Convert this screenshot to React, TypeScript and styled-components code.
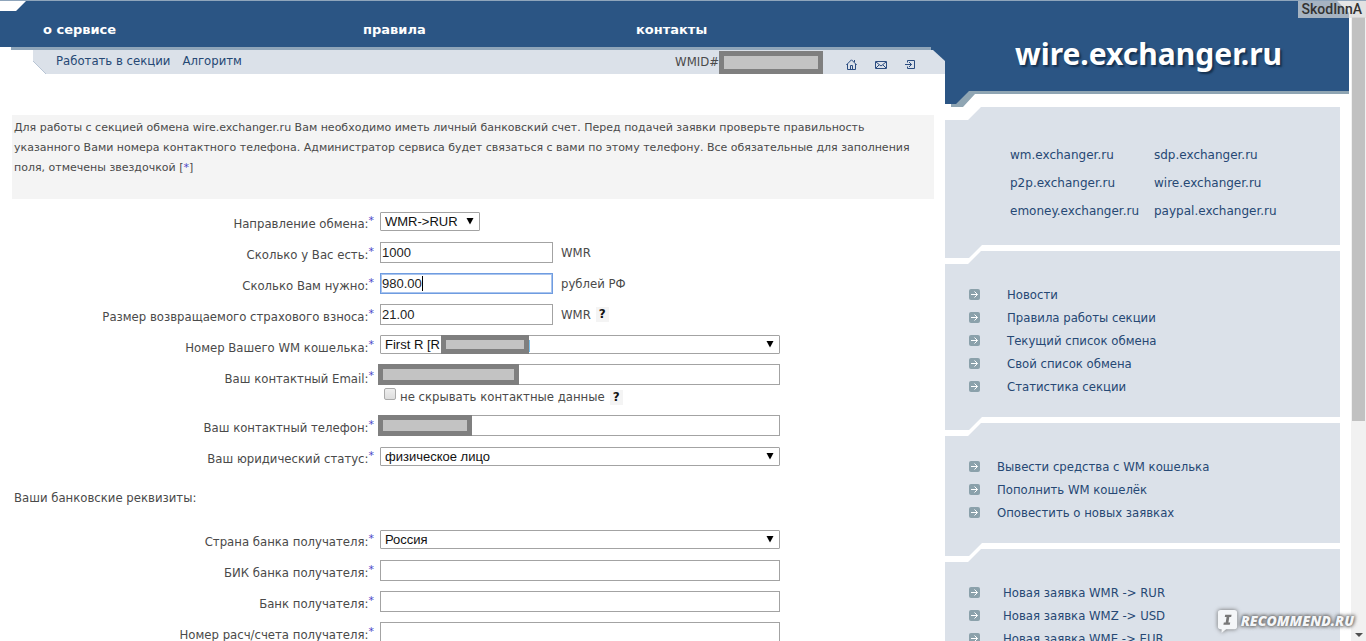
import React from 'react';
import styled, { createGlobalStyle } from 'styled-components';

const GlobalStyle = createGlobalStyle`
  *, *::before, *::after { box-sizing: border-box; }
  html, body, #root { height: 100%; }
  body { margin: 0; background: #fff; color: #4a4a4a; font: 13px/20px "DejaVu Sans Condensed", Tahoma, sans-serif; overflow: hidden; }
  a { color: #264874; text-decoration: none; }
  a:hover { text-decoration: underline; }
`;

const Window = styled.div`
  position: relative;
  display: flex;
  height: 100%;
  overflow: hidden;
  border-top: 1px solid #8fa5bb;
`;

const Main = styled.main`
  flex: 1;
  min-width: 0;
`;

const NavBar = styled.nav`
  display: flex;
  height: 46px;
  padding: 19px 0 0 43px;
  background: #2b5584;
  clip-path: polygon(26px 0, 100% 0, 100% 100%, 0 100%, 0 10px, 16px 10px);
`;

const NavLink = styled.a<{ $width: number }>`
  width: ${p => p.$width}px;
  color: #fff;
  font: bold 13px/20px "DejaVu Sans", Verdana, sans-serif;
`;

const NavShadow = styled.div`
  height: 3px;
  margin-left: 11px;
  background: linear-gradient(#8fa5b9, #8fa5b9) left / calc(100% - 14px) 100% no-repeat #2b5584;
`;

const SubBar = styled.div`
  height: 24px;
  margin-left: 33px;
  background: #2b5584;
  clip-path: polygon(0 0, 100% 0, 100% 100%, 13px 100%, 0 11px);
`;

const SubInner = styled.div`
  display: flex;
  align-items: center;
  height: 24px;
  padding: 0 30px 0 23px;
  background: #dbe1e9;
  clip-path: polygon(0 0, calc(100% - 12px) 0, 100% 11px, 100% 100%, 0 100%);
`;

const SubLinks = styled.div`
  display: flex;
  flex: 1;
  gap: 12px;
  padding-bottom: 2px;
`;

const Redacted = styled.span<{ $width: number }>`
  display: block;
  flex: none;
  width: ${p => p.$width}px;
  height: 23px;
  border: 5px solid #7f7f7f;
  background: #c3c3c3;
`;

const Tools = styled.div`
  display: flex;
  gap: 18px;
  margin-left: 23px;
  a { display: flex; padding-top: 4px; }
`;

const Intro = styled.p`
  margin: 41px 11px 9px 12px;
  padding: 3px 2px 21px;
  background: #f4f4f4;
  font: 11px/20px "DejaVu Sans", Verdana, sans-serif;
`;

const Star = styled.span`
  color: #4a44c8;
`;

const Row = styled.div`
  display: grid;
  grid-template-columns: 374px 1fr;
  column-gap: 6px;
  min-height: 31px;
`;

const Label = styled.label`
  padding-top: 6px;
  text-align: right;
  white-space: nowrap;
  sup { color: #4a44c8; font: 11px/1px "DejaVu Sans", Verdana, sans-serif; vertical-align: 4px; }
`;

const FieldLine = styled.div<{ $height?: number }>`
  display: flex;
  align-items: center;
  height: ${p => p.$height ?? 31}px;
  padding-bottom: 4px;
`;

const Covered = styled.div<{ $left: number }>`
  position: relative;
  display: flex;
  > span:last-child { position: absolute; top: 0; left: ${p => p.$left}px; height: 100%; }
`;

const TextInput = styled.input<{ $width: number }>`
  width: ${p => p.$width}px;
  height: 21px;
  padding: 1px;
  border: 1px solid #a3a3a3;
  background: #fff;
  color: #222;
  font: 13px "Liberation Sans", Arial, sans-serif;
  outline: none;
  caret-color: transparent;
  &:focus { border-color: #6f9ce0; box-shadow: inset 0 0 0 1px #a9c4ee; }
`;

const Caret = styled.span`
  width: 1px;
  background: #000;
  background-clip: content-box;
  padding: 3px 0;
`;

const SelectBox = styled.span`
  position: relative;
  display: inline-flex;
  svg { position: absolute; right: 6px; top: 6px; pointer-events: none; }
`;

const Select = styled.select<{ $width: number }>`
  appearance: none;
  width: ${p => p.$width}px;
  height: 19px;
  padding: 0 4px;
  border: 1px solid #a3a3a3;
  border-radius: 1px;
  background: #fff;
  color: #111;
  font: 13px "Liberation Sans", Arial, sans-serif;
`;

const Unit = styled.span`
  margin-left: 8px;
`;

const Help = styled.button`
  margin-left: 5px;
  padding: 0 3px;
  border: 0;
  background: #f4f4f4;
  color: #111;
  font: bold 12px/15px "DejaVu Sans", Verdana, sans-serif;
`;

const CheckLine = styled.div`
  display: flex;
  align-items: center;
  height: 14px;
  margin-bottom: 8px;
  padding-left: 4px;
  label { margin-left: 4px; }
`;

const CheckBox = styled.input`
  appearance: none;
  width: 12px;
  height: 12px;
  margin: 0 0 6px;
  border: 1px solid #aaa;
  border-radius: 2px;
  background: linear-gradient(#eee, #ddd);
`;

const SectionTitle = styled.h2`
  margin: 14px 0 18px 14px;
  font-size: 13px;
  font-weight: normal;
`;

const Side = styled.aside`
  flex: none;
  width: 404px;
`;

const BrandShadow = styled.div`
  height: 106px;
  background: #8fa5b3;
  clip-path: polygon(0 0, 392px 0, 100% 12px, 100% 93px, 30px 93px, 18px 106px, 6px 106px, 6px 103px, 0 103px);
`;

const Brand = styled.div`
  height: 103px;
  padding: 33px 0 0 70px;
  background: #2b5584;
  clip-path: polygon(0 0, 100% 0, 100% 90px, 24px 90px, 11px 103px, 0 103px);
`;

const Logo = styled.a`
  color: #fff;
  font: bold 30px/40px "Noto Sans", "Trebuchet MS", sans-serif;
  text-shadow: 2px 2px 2px #14304f;
`;

const Panel = styled.section`
  margin: -7px 9px 0 0;
  background: #dbe1e9;
  clip-path: polygon(0 13px, 23px 13px, 36px 0, 100% 0, 100% calc(100% - 13px), 37px calc(100% - 13px), 24px 100%, 0 100%);
`;

const SitesPanel = styled(Panel)`
  margin-top: 0;
`;

const Sites = styled.div`
  display: grid;
  grid-template-columns: 144px 1fr;
  row-gap: 8px;
  padding: 38px 0 37px 65px;
  font: 12px/20px "DejaVu Sans", Verdana, sans-serif;
`;

const Menu = styled.ul<{ $indent: number }>`
  margin: 0;
  padding: 32px 0 32px 24px;
  list-style: none;
  li { display: flex; align-items: center; height: 23px; }
  a { margin-left: ${p => p.$indent}px; }
`;

const ScrollTrack = styled.div`
  display: flex;
  flex: none;
  flex-direction: column;
  justify-content: space-between;
  align-items: center;
  width: 15px;
  margin-left: 2px;
  padding: 16px 1px 3px;
  background: #f1f1f1;
`;

const ScrollThumb = styled.div`
  width: 13px;
  height: 65%;
  background: #c1c1c1;
`;

const UserTag = styled.div`
  position: absolute;
  top: -1px;
  right: 0;
  padding: 0 4px;
  background: rgba(220, 220, 220, 0.7);
  color: #333;
  font: 500 14px/18px Roboto, sans-serif;
`;

const Watermark = styled.div`
  position: absolute;
  right: 12px;
  bottom: 6px;
  display: flex;
  align-items: center;
  gap: 3px;
  color: #f4f6f8;
  font: italic 800 14px/28px "Open Sans", sans-serif;
  text-shadow: 0 0 3px #666, 0 0 4px #777, 0 0 4px #777;
  svg { filter: drop-shadow(0 0 2px #666); }
`;

const Bullet = () => (
  <svg width="11" height="11" viewBox="0 0 11 11" aria-hidden="true">
    <rect width="11" height="11" rx="2" fill="#8ba1ab" />
    <path d="M2 5.5H8.5M5.5 2.5L8.5 5.5L5.5 8.5" fill="none" stroke="#fff" />
  </svg>
);

const Redaction = ({ width }: { width: number }) => <Redacted $width={width} />;

type FieldProps = { id: string; label: string; children: React.ReactNode };
const Field = ({ id, label, children }: FieldProps) => (
  <Row>
    <Label htmlFor={id}>{label}:<sup>*</sup></Label>
    <div>{children}</div>
  </Row>
);

const DropDown = ({ id, width, value }: { id: string; width: number; value: string }) => (
  <SelectBox>
    <Select id={id} $width={width}><option>{value}</option></Select>
    <svg width="8" height="7" viewBox="0 0 8 7" aria-hidden="true"><path d="M.5 0H7.5L4 6.500Z" fill="#000" /></svg>
  </SelectBox>
);

const MenuPanel = ({ items, indent }: { items: string[]; indent: number }) => (
  <Panel>
    <Menu $indent={indent}>
      {items.map(t => <li key={t}><Bullet /><a href="#">{t}</a></li>)}
    </Menu>
  </Panel>
);

const sites = ['wm', 'sdp', 'p2p', 'wire', 'emoney', 'paypal'];
const purse = `First R [R${'\u00a0'.repeat(24)}]`;

export default function App() {
  return (
    <>
      <GlobalStyle />
      <Window>
        <Main>
          <NavBar>
            <NavLink href="#" $width={320}>о сервисе</NavLink>
            <NavLink href="#" $width={273}>правила</NavLink>
            <NavLink href="#" $width={90}>контакты</NavLink>
          </NavBar>
          <NavShadow />
          <SubBar>
            <SubInner>
              <SubLinks>
                <a href="#">Работать в секции</a>
                <a href="#">Алгоритм</a>
              </SubLinks>
              <span>WMID#</span>
              <Redaction width={104} />
              <Tools>
                <a href="#" aria-label="Главная">
                  <svg width="11" height="11" viewBox="0 0 11 11" fill="none" stroke="#2b4c80"><path d="M.3 6L5.500 .8L10.700 6M1.500 5V10.500H9.500V5M4.500 10V6.500H6.500V10M8.500 1V3" /></svg>
                </a>
                <a href="#" aria-label="Почта">
                  <svg width="12" height="11" viewBox="0 0 12 11" fill="none" stroke="#2b4c80"><path d="M.5 2.500H11.500V9.500H.5ZM1 3L6 7L11 3M1 9L4 6M11 9L8 6" /></svg>
                </a>
                <a href="#" aria-label="Выход">
                  <svg width="10" height="11" viewBox="0 0 10 11" fill="none" stroke="#2b4c80"><path d="M2.500 3.500V1.500H9.500V9.500H2.500V7.500M0 5.500H6.500M4 3L6.500 5.500L4 8" /></svg>
                </a>
              </Tools>
            </SubInner>
          </SubBar>
          <Intro>
            Для работы с секцией обмена wire.exchanger.ru Вам необходимо иметь личный банковский счет. Перед подачей заявки проверьте правильность указанного Вами номера контактного телефона. Администратор сервиса будет связаться с вами по этому телефону. Все обязательные для заполнения поля, отмечены звездочкой [<Star>*</Star>]
          </Intro>
          <form>
            <Field id="dir" label="Направление обмена">
              <FieldLine><DropDown id="dir" width={100} value="WMR->RUR" /></FieldLine>
            </Field>
            <Field id="have" label="Сколько у Вас есть">
              <FieldLine><TextInput id="have" $width={173} defaultValue="1000" /><Unit>WMR</Unit></FieldLine>
            </Field>
            <Field id="need" label="Сколько Вам нужно">
              <FieldLine>
                <Covered $left={42}><TextInput id="need" $width={173} defaultValue="980.00" autoFocus /><Caret /></Covered>
                <Unit>рублей РФ</Unit>
              </FieldLine>
            </Field>
            <Field id="fee" label="Размер возвращаемого страхового взноса">
              <FieldLine><TextInput id="fee" $width={173} defaultValue="21.00" /><Unit>WMR</Unit><Help type="button">?</Help></FieldLine>
            </Field>
            <Field id="purse" label="Номер Вашего WM кошелька">
              <FieldLine $height={29}>
                <Covered $left={61}><DropDown id="purse" width={400} value={purse} /><Redaction width={88} /></Covered>
              </FieldLine>
            </Field>
            <Field id="email" label="Ваш контактный Email">
              <FieldLine $height={27}>
                <Covered $left={-2}><TextInput id="email" $width={400} /><Redaction width={141} /></Covered>
              </FieldLine>
              <CheckLine><CheckBox id="show" type="checkbox" /><label htmlFor="show">не скрывать контактные данные</label><Help type="button">?</Help></CheckLine>
            </Field>
            <Field id="phone" label="Ваш контактный телефон">
              <FieldLine>
                <Covered $left={-2}><TextInput id="phone" $width={400} /><Redaction width={94} /></Covered>
              </FieldLine>
            </Field>
            <Field id="status" label="Ваш юридический статус">
              <FieldLine><DropDown id="status" width={400} value="физическое лицо" /></FieldLine>
            </Field>
            <SectionTitle>Ваши банковские реквизиты:</SectionTitle>
            <Field id="country" label="Страна банка получателя">
              <FieldLine><DropDown id="country" width={400} value="Россия" /></FieldLine>
            </Field>
            <Field id="bik" label="БИК банка получателя">
              <FieldLine><TextInput id="bik" $width={400} /></FieldLine>
            </Field>
            <Field id="bank" label="Банк получателя">
              <FieldLine><TextInput id="bank" $width={400} /></FieldLine>
            </Field>
            <Field id="account" label="Номер расч/счета получателя">
              <FieldLine><TextInput id="account" $width={400} /></FieldLine>
            </Field>
          </form>
        </Main>
        <Side>
          <BrandShadow><Brand><Logo href="#">wire.exchanger.ru</Logo></Brand></BrandShadow>
          <SitesPanel>
            <Sites>{sites.map(s => <a key={s} href="#">{s}.exchanger.ru</a>)}</Sites>
          </SitesPanel>
          <MenuPanel indent={27} items={['Новости', 'Правила работы секции', 'Текущий список обмена', 'Свой список обмена', 'Статистика секции']} />
          <MenuPanel indent={17} items={['Вывести средства с WM кошелька', 'Пополнить WM кошелёк', 'Оповестить о новых заявках']} />
          <MenuPanel indent={23} items={['Новая заявка WMR -> RUR', 'Новая заявка WMZ -> USD', 'Новая заявка WME -> EUR']} />
        </Side>
        <ScrollTrack>
          <ScrollThumb />
          <svg width="8" height="5" viewBox="0 0 8 5" aria-hidden="true"><path d="M0 0H8L4 4Z" fill="#505050" /></svg>
        </ScrollTrack>
        <UserTag>SkodInnA</UserTag>
        <Watermark>
          <svg width="21" height="25" viewBox="0 0 23 27" aria-hidden="true">
            <path d="M4 1H19Q22 1 22 4V19Q22 22 19 22H10L5 26V22H4Q1 22 1 19V4Q1 1 4 1Z" fill="#f4f6f8" />
            <path d="M9 6H16L15.500 8.500H13.500L12.500 14.500H14.500L14 17H7L7.500 14.500H9.500L10.500 8.500H8.500Z" fill="#777" />
          </svg>
          <span>RECOMMEND.RU</span>
        </Watermark>
      </Window>
    </>
  );
}
